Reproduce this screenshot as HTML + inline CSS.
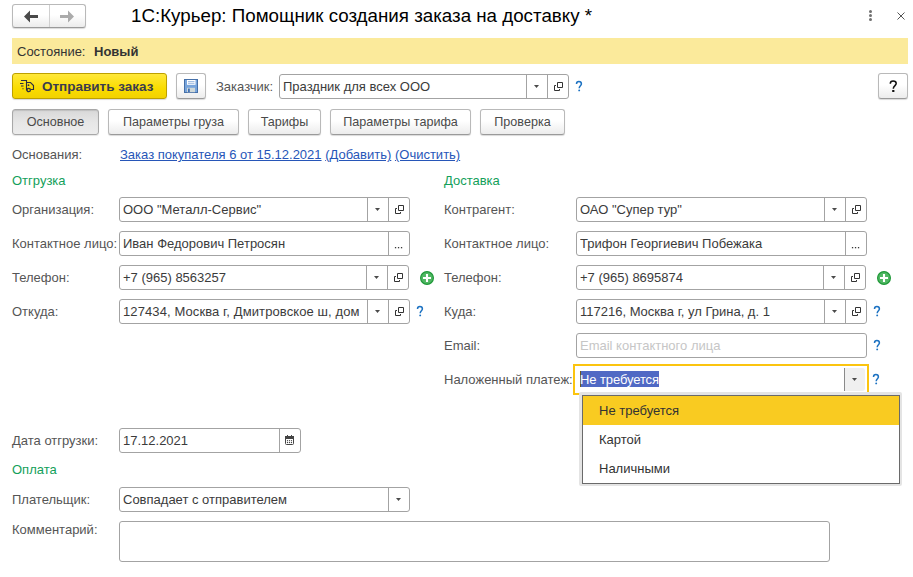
<!DOCTYPE html>
<html><head><meta charset="utf-8">
<style>
*{box-sizing:border-box;margin:0;padding:0}
html,body{width:913px;height:577px;overflow:hidden;background:#fff}
body{position:relative;font-family:"Liberation Sans",sans-serif;font-size:13px;color:#4d4d4d}
.a{position:absolute;white-space:nowrap}
.lbl{position:absolute;white-space:nowrap;font-size:13px;line-height:15px}
.btn{position:absolute;border:1px solid #b9b9b9;border-bottom-color:#9a9a9a;border-radius:3px;background:linear-gradient(#ffffff,#ffffff 45%,#ececec);box-shadow:0 1px 1px rgba(0,0,0,.15);color:#4a4a4a;font-size:12.6px;text-align:center}
.fld{position:absolute;border:1px solid #a3a3a3;border-radius:3px;background:#fff}
.ft{position:absolute;font-size:13px;line-height:15px;white-space:nowrap;overflow:hidden}
.q{position:absolute;color:#1c72c2;font-size:14px;line-height:16px}
</style></head>
<body>

<div class="btn" style="left:12px;top:4px;width:74px;height:24px;line-height:22px"></div>
<div class="a" style="left:49px;top:5px;width:1px;height:22px;background:#d0d0d0"></div>
<svg class="a" style="left:23px;top:10px" width="16" height="13" viewBox="0 0 16 13"><path d="M1 6.5 L7 0.5 V5 H15 V8 H7 V12.5 Z" fill="#4a4a4a"/></svg>
<svg class="a" style="left:59px;top:10px" width="16" height="13" viewBox="0 0 16 13"><path d="M15 6.5 L9 0.5 V5 H1 V8 H9 V12.5 Z" fill="#ababab"/></svg>
<div class="a" style="left:131px;top:5px;font-size:18.75px;line-height:22px;color:#000">1С:Курьер: Помощник создания заказа на доставку *</div>
<div class="a" style="left:869px;top:10px;width:3px;height:3px;border-radius:50%;background:#707070"></div>
<div class="a" style="left:869px;top:14px;width:3px;height:3px;border-radius:50%;background:#707070"></div>
<div class="a" style="left:869px;top:18px;width:3px;height:3px;border-radius:50%;background:#707070"></div>
<svg class="a" style="left:897px;top:12px" width="8" height="8" viewBox="0 0 8 8"><path d="M0.5 0.5L7.5 7.5M7.5 0.5L0.5 7.5" stroke="#555" stroke-width="1"/></svg>
<div class="a" style="left:12px;top:38px;width:896px;height:26px;background:#fbea9b"></div>
<div class="lbl" style="left:17px;top:44px;color:#333">Состояние:</div>
<div class="lbl" style="left:94px;top:44px;color:#333;font-weight:bold">Новый</div>
<div class="a" style="left:12px;top:73px;width:155px;height:26px;border:1px solid #bda000;border-radius:3px;background:linear-gradient(#ffe83a,#fadc00 60%,#f2d200);box-shadow:0 1px 1px rgba(0,0,0,.15)"></div>
<svg class="a" style="left:19px;top:79px" width="17" height="14" viewBox="0 0 17 14"><g fill="none" stroke="#2d3040" stroke-width="1.1"><path d="M2 1.5H7.5V11.5"/><path d="M7.5 3.5H11.5L14.5 6.5V10.5H12"/><path d="M1 4.5H4.5M2 7H4.5M3.5 9.7H4.5"/><circle cx="9.7" cy="11" r="1.7" stroke-width="1.3"/></g><circle cx="9.5" cy="6.2" r="0.9" fill="#2d3040"/></svg>
<div class="a" style="left:42px;top:79px;font-size:13.5px;line-height:15px;font-weight:bold;color:#3a3c4e">Отправить заказ</div>
<div class="btn" style="left:176px;top:73px;width:30px;height:26px;line-height:24px"></div>
<svg class="a" style="left:184px;top:79px" width="14" height="14" viewBox="0 0 14 14"><rect x="0.5" y="0.5" width="13" height="13" fill="#78a5dc" stroke="#4670a8"/><rect x="3" y="1" width="8.5" height="4.8" fill="#fff"/><path d="M4 2.6H10.5M4 4.3H10.5" stroke="#8fb0dd" stroke-width="0.9"/><rect x="3" y="8.8" width="8" height="4.4" fill="#cfd8d8"/><rect x="4" y="9.6" width="1.8" height="3.4" fill="#3f6fb3"/></svg>
<div class="lbl" style="left:216px;top:79px;color:#555555">Заказчик:</div>
<div class="fld" style="left:279px;top:74px;width:290px;height:25px"></div>
<div class="ft" style="left:283px;top:79px;width:243px;color:#3b3b3b">Праздник для всех ООО</div>
<div class="a" style="left:526px;top:74px;width:1px;height:25px;background:#a3a3a3"></div>
<svg class="a" style="left:534px;top:85px" width="5" height="3" viewBox="0 0 5 3"><path d="M0 0H5L2.5 3Z" fill="#4a4a4a"/></svg>
<div class="a" style="left:547px;top:74px;width:1px;height:25px;background:#a3a3a3"></div>
<svg class="a" style="left:554px;top:82px" width="9" height="9" viewBox="0 0 9 9"><path d="M3.5 0.5H8.5V5.5H3.5Z" fill="none" stroke="#333" stroke-width="1"/><path d="M2 3.5H0.5V8.5H5.5V7" fill="none" stroke="#333" stroke-width="1"/></svg>
<svg class="a" style="left:575px;top:80px" width="8" height="12" viewBox="0 0 8 12"><path d="M1.5 4C1.5 2.3 2.6 1.6 3.9 1.6C5.3 1.6 6.4 2.5 6.4 3.9C6.4 5.6 4.2 5.9 4.2 8.3" fill="none" stroke="#1c72c2" stroke-width="1.5"/><circle cx="4.2" cy="10.4" r="0.95" fill="#1c72c2"/></svg>
<div class="btn" style="left:878px;top:73px;width:30px;height:26px;line-height:24px"></div>
<svg class="a" style="left:889px;top:80px" width="9" height="13" viewBox="0 0 9 13"><path d="M1.3 3.7C1.3 1.9 2.6 1.1 4.1 1.1C5.8 1.1 7.2 2.1 7.2 3.6C7.2 5.4 4.3 6 4.3 8.7" fill="none" stroke="#111" stroke-width="1.5"/><rect x="3.2" y="10" width="2.2" height="2" fill="#111"/></svg>
<div class="btn" style="left:12px;top:109px;width:87px;height:26px;line-height:24px;background:linear-gradient(#d8d8d8,#e6e6e6 50%,#ececec);border-color:#a8a8a8;box-shadow:inset 0 1px 1px rgba(0,0,0,.12),0 1px 1px rgba(0,0,0,.1)">Основное</div>
<div class="btn" style="left:108px;top:109px;width:131px;height:26px;line-height:24px">Параметры груза</div>
<div class="btn" style="left:248px;top:109px;width:73px;height:26px;line-height:24px">Тарифы</div>
<div class="btn" style="left:330px;top:109px;width:141px;height:26px;line-height:24px">Параметры тарифа</div>
<div class="btn" style="left:480px;top:109px;width:85px;height:26px;line-height:24px">Проверка</div>
<div class="lbl" style="left:12px;top:147px;color:#555555">Основания:</div>
<div class="lbl" style="left:120px;top:147px;color:#2756b8"><u>Заказ покупателя 6 от 15.12.2021</u> <u>(Добавить)</u> <u>(Очистить)</u></div>
<div class="lbl" style="left:12px;top:173px;color:#13a05a">Отгрузка</div>
<div class="lbl" style="left:444px;top:173px;color:#13a05a">Доставка</div>
<div class="lbl" style="left:12px;top:202px;color:#555555">Организация:</div>
<div class="fld" style="left:119px;top:197px;width:291px;height:25px"></div>
<div class="ft" style="left:123px;top:202px;width:244px;color:#3b3b3b">ООО "Металл-Сервис"</div>
<div class="a" style="left:367px;top:197px;width:1px;height:25px;background:#a3a3a3"></div>
<svg class="a" style="left:375px;top:208px" width="5" height="3" viewBox="0 0 5 3"><path d="M0 0H5L2.5 3Z" fill="#4a4a4a"/></svg>
<div class="a" style="left:388px;top:197px;width:1px;height:25px;background:#a3a3a3"></div>
<svg class="a" style="left:395px;top:205px" width="9" height="9" viewBox="0 0 9 9"><path d="M3.5 0.5H8.5V5.5H3.5Z" fill="none" stroke="#333" stroke-width="1"/><path d="M2 3.5H0.5V8.5H5.5V7" fill="none" stroke="#333" stroke-width="1"/></svg>
<div class="lbl" style="left:12px;top:236px;color:#555555">Контактное лицо:</div>
<div class="fld" style="left:119px;top:231px;width:291px;height:25px"></div>
<div class="ft" style="left:123px;top:236px;width:265px;color:#3b3b3b">Иван Федорович Петросян</div>
<div class="a" style="left:388px;top:231px;width:1px;height:25px;background:#a3a3a3"></div>
<svg class="a" style="left:394px;top:247px" width="9" height="2" viewBox="0 0 9 2"><rect x="0.9" y="0" width="1.3" height="1.3" fill="#3a3a3a"/><rect x="3.9" y="0" width="1.3" height="1.3" fill="#3a3a3a"/><rect x="6.9" y="0" width="1.3" height="1.3" fill="#3a3a3a"/></svg>
<div class="lbl" style="left:12px;top:270px;color:#555555">Телефон:</div>
<div class="fld" style="left:119px;top:265px;width:290px;height:25px"></div>
<div class="ft" style="left:123px;top:270px;width:243px;color:#3b3b3b">+7 (965) 8563257</div>
<div class="a" style="left:366px;top:265px;width:1px;height:25px;background:#a3a3a3"></div>
<svg class="a" style="left:374px;top:276px" width="5" height="3" viewBox="0 0 5 3"><path d="M0 0H5L2.5 3Z" fill="#4a4a4a"/></svg>
<div class="a" style="left:387px;top:265px;width:1px;height:25px;background:#a3a3a3"></div>
<svg class="a" style="left:394px;top:273px" width="9" height="9" viewBox="0 0 9 9"><path d="M3.5 0.5H8.5V5.5H3.5Z" fill="none" stroke="#333" stroke-width="1"/><path d="M2 3.5H0.5V8.5H5.5V7" fill="none" stroke="#333" stroke-width="1"/></svg>
<svg class="a" style="left:420px;top:271px" width="14" height="14" viewBox="0 0 14 14"><circle cx="7" cy="7" r="6.4" fill="#50b763" stroke="#1f9838" stroke-width="1.2"/><path d="M7 3V11M3 7H11" stroke="#fff" stroke-width="2.1"/></svg>
<div class="lbl" style="left:12px;top:304px;color:#555555">Откуда:</div>
<div class="fld" style="left:119px;top:299px;width:291px;height:25px"></div>
<div class="ft" style="left:123px;top:304px;width:244px;color:#3b3b3b"><span style="letter-spacing:0.1px">127434, Москва г, Дмитровское ш, дом 9</span></div>
<div class="a" style="left:367px;top:299px;width:1px;height:25px;background:#a3a3a3"></div>
<svg class="a" style="left:375px;top:310px" width="5" height="3" viewBox="0 0 5 3"><path d="M0 0H5L2.5 3Z" fill="#4a4a4a"/></svg>
<div class="a" style="left:388px;top:299px;width:1px;height:25px;background:#a3a3a3"></div>
<svg class="a" style="left:395px;top:307px" width="9" height="9" viewBox="0 0 9 9"><path d="M3.5 0.5H8.5V5.5H3.5Z" fill="none" stroke="#333" stroke-width="1"/><path d="M2 3.5H0.5V8.5H5.5V7" fill="none" stroke="#333" stroke-width="1"/></svg>
<div class="a" style="left:360px;top:300px;width:7px;height:23px;background:linear-gradient(90deg,rgba(255,255,255,.6),#fff 60%)"></div>
<svg class="a" style="left:416px;top:305px" width="8" height="12" viewBox="0 0 8 12"><path d="M1.5 4C1.5 2.3 2.6 1.6 3.9 1.6C5.3 1.6 6.4 2.5 6.4 3.9C6.4 5.6 4.2 5.9 4.2 8.3" fill="none" stroke="#1c72c2" stroke-width="1.5"/><circle cx="4.2" cy="10.4" r="0.95" fill="#1c72c2"/></svg>
<div class="lbl" style="left:444px;top:202px;color:#555555">Контрагент:</div>
<div class="fld" style="left:576px;top:197px;width:291px;height:25px"></div>
<div class="ft" style="left:580px;top:202px;width:244px;color:#3b3b3b">ОАО "Супер тур"</div>
<div class="a" style="left:824px;top:197px;width:1px;height:25px;background:#a3a3a3"></div>
<svg class="a" style="left:832px;top:208px" width="5" height="3" viewBox="0 0 5 3"><path d="M0 0H5L2.5 3Z" fill="#4a4a4a"/></svg>
<div class="a" style="left:845px;top:197px;width:1px;height:25px;background:#a3a3a3"></div>
<svg class="a" style="left:852px;top:205px" width="9" height="9" viewBox="0 0 9 9"><path d="M3.5 0.5H8.5V5.5H3.5Z" fill="none" stroke="#333" stroke-width="1"/><path d="M2 3.5H0.5V8.5H5.5V7" fill="none" stroke="#333" stroke-width="1"/></svg>
<div class="lbl" style="left:444px;top:236px;color:#555555">Контактное лицо:</div>
<div class="fld" style="left:576px;top:231px;width:291px;height:25px"></div>
<div class="ft" style="left:580px;top:236px;width:265px;color:#3b3b3b">Трифон Георгиевич Побежака</div>
<div class="a" style="left:845px;top:231px;width:1px;height:25px;background:#a3a3a3"></div>
<svg class="a" style="left:851px;top:247px" width="9" height="2" viewBox="0 0 9 2"><rect x="0.9" y="0" width="1.3" height="1.3" fill="#3a3a3a"/><rect x="3.9" y="0" width="1.3" height="1.3" fill="#3a3a3a"/><rect x="6.9" y="0" width="1.3" height="1.3" fill="#3a3a3a"/></svg>
<div class="lbl" style="left:444px;top:270px;color:#555555">Телефон:</div>
<div class="fld" style="left:576px;top:265px;width:290px;height:25px"></div>
<div class="ft" style="left:580px;top:270px;width:243px;color:#3b3b3b">+7 (965) 8695874</div>
<div class="a" style="left:823px;top:265px;width:1px;height:25px;background:#a3a3a3"></div>
<svg class="a" style="left:831px;top:276px" width="5" height="3" viewBox="0 0 5 3"><path d="M0 0H5L2.5 3Z" fill="#4a4a4a"/></svg>
<div class="a" style="left:844px;top:265px;width:1px;height:25px;background:#a3a3a3"></div>
<svg class="a" style="left:851px;top:273px" width="9" height="9" viewBox="0 0 9 9"><path d="M3.5 0.5H8.5V5.5H3.5Z" fill="none" stroke="#333" stroke-width="1"/><path d="M2 3.5H0.5V8.5H5.5V7" fill="none" stroke="#333" stroke-width="1"/></svg>
<svg class="a" style="left:877px;top:271px" width="14" height="14" viewBox="0 0 14 14"><circle cx="7" cy="7" r="6.4" fill="#50b763" stroke="#1f9838" stroke-width="1.2"/><path d="M7 3V11M3 7H11" stroke="#fff" stroke-width="2.1"/></svg>
<div class="lbl" style="left:444px;top:304px;color:#555555">Куда:</div>
<div class="fld" style="left:576px;top:299px;width:291px;height:25px"></div>
<div class="ft" style="left:580px;top:304px;width:244px;color:#3b3b3b">117216, Москва г, ул Грина, д. 1</div>
<div class="a" style="left:824px;top:299px;width:1px;height:25px;background:#a3a3a3"></div>
<svg class="a" style="left:832px;top:310px" width="5" height="3" viewBox="0 0 5 3"><path d="M0 0H5L2.5 3Z" fill="#4a4a4a"/></svg>
<div class="a" style="left:845px;top:299px;width:1px;height:25px;background:#a3a3a3"></div>
<svg class="a" style="left:852px;top:307px" width="9" height="9" viewBox="0 0 9 9"><path d="M3.5 0.5H8.5V5.5H3.5Z" fill="none" stroke="#333" stroke-width="1"/><path d="M2 3.5H0.5V8.5H5.5V7" fill="none" stroke="#333" stroke-width="1"/></svg>
<svg class="a" style="left:873px;top:305px" width="8" height="12" viewBox="0 0 8 12"><path d="M1.5 4C1.5 2.3 2.6 1.6 3.9 1.6C5.3 1.6 6.4 2.5 6.4 3.9C6.4 5.6 4.2 5.9 4.2 8.3" fill="none" stroke="#1c72c2" stroke-width="1.5"/><circle cx="4.2" cy="10.4" r="0.95" fill="#1c72c2"/></svg>
<div class="lbl" style="left:444px;top:338px;color:#555555">Email:</div>
<div class="fld" style="left:576px;top:333px;width:291px;height:25px"></div>
<div class="ft" style="left:580px;top:338px;width:286px;color:#c6c6c6">Email контактного лица</div>
<svg class="a" style="left:873px;top:339px" width="8" height="12" viewBox="0 0 8 12"><path d="M1.5 4C1.5 2.3 2.6 1.6 3.9 1.6C5.3 1.6 6.4 2.5 6.4 3.9C6.4 5.6 4.2 5.9 4.2 8.3" fill="none" stroke="#1c72c2" stroke-width="1.5"/><circle cx="4.2" cy="10.4" r="0.95" fill="#1c72c2"/></svg>
<div class="lbl" style="left:444px;top:372px;color:#555555">Наложенный платеж:</div>
<div class="a" style="left:573px;top:364px;width:296px;height:31px;border:2px solid #fbc40f;background:#fff"></div>
<div class="a" style="left:845px;top:368px;width:20px;height:23px;background:#f0f0f0;border-radius:0 3px 3px 0"></div><div class="a" style="left:844px;top:368px;width:1px;height:23px;background:#8a8a8a"></div>
<svg class="a" style="left:852px;top:378px" width="5" height="3" viewBox="0 0 5 3"><path d="M0 0H5L2.5 3Z" fill="#4a4a4a"/></svg>
<div class="a" style="left:580px;top:371px;width:79px;height:16px;background:#5069c4"></div>
<div class="a" style="left:580px;top:371px;width:1px;height:16px;background:#6b5a20"></div>
<div class="lbl" style="left:580px;top:372px;color:#fff;letter-spacing:-0.1px">Не требуется</div>
<svg class="a" style="left:872px;top:373px" width="8" height="12" viewBox="0 0 8 12"><path d="M1.5 4C1.5 2.3 2.6 1.6 3.9 1.6C5.3 1.6 6.4 2.5 6.4 3.9C6.4 5.6 4.2 5.9 4.2 8.3" fill="none" stroke="#1c72c2" stroke-width="1.5"/><circle cx="4.2" cy="10.4" r="0.95" fill="#1c72c2"/></svg>
<div class="lbl" style="left:12px;top:433px;color:#555555">Дата отгрузки:</div>
<div class="fld" style="left:119px;top:428px;width:182px;height:25px"></div>
<div class="ft" style="left:123px;top:433px;width:156px;color:#3b3b3b">17.12.2021</div>
<div class="a" style="left:279px;top:428px;width:1px;height:25px;background:#a3a3a3"></div>
<svg class="a" style="left:285px;top:435px" width="9" height="10" viewBox="0 0 9 10"><rect x="0.5" y="1.5" width="8" height="8" rx="1" fill="#fff" stroke="#444" stroke-width="1"/><rect x="0" y="1" width="9" height="3" fill="#444"/><rect x="2" y="0" width="1" height="2" fill="#444"/><rect x="6" y="0" width="1" height="2" fill="#444"/><circle cx="2.5" cy="5.6" r="0.65" fill="#444"/><circle cx="2.5" cy="7.5" r="0.65" fill="#444"/><circle cx="4.5" cy="5.6" r="0.65" fill="#444"/><circle cx="4.5" cy="7.5" r="0.65" fill="#444"/><circle cx="6.5" cy="5.6" r="0.65" fill="#444"/><circle cx="6.5" cy="7.5" r="0.65" fill="#444"/></svg>
<div class="lbl" style="left:12px;top:462px;color:#13a05a">Оплата</div>
<div class="lbl" style="left:12px;top:492px;color:#555555">Плательщик:</div>
<div class="fld" style="left:119px;top:487px;width:291px;height:25px"></div>
<div class="ft" style="left:123px;top:492px;width:265px;color:#3b3b3b">Совпадает с отправителем</div>
<div class="a" style="left:388px;top:487px;width:1px;height:25px;background:#a3a3a3"></div>
<svg class="a" style="left:396px;top:498px" width="5" height="3" viewBox="0 0 5 3"><path d="M0 0H5L2.5 3Z" fill="#4a4a4a"/></svg>
<div class="lbl" style="left:12px;top:522px;color:#555555">Комментарий:</div>
<div class="fld" style="left:119px;top:521px;width:711px;height:41px"></div>
<div class="a" style="left:579px;top:392px;width:323px;height:94px;background:#e4e4e4;border-radius:2px"></div>
<div class="a" style="left:582px;top:395px;width:318px;height:89px;border:1px solid #6a6a6a;background:#fff"></div>
<div class="a" style="left:583px;top:396px;width:316px;height:29px;background:#f9cb21"></div>
<div class="lbl" style="left:599px;top:403px;color:#333">Не требуется</div>
<div class="lbl" style="left:599px;top:432px;color:#333">Картой</div>
<div class="lbl" style="left:599px;top:461px;color:#333">Наличными</div>
</body></html>
